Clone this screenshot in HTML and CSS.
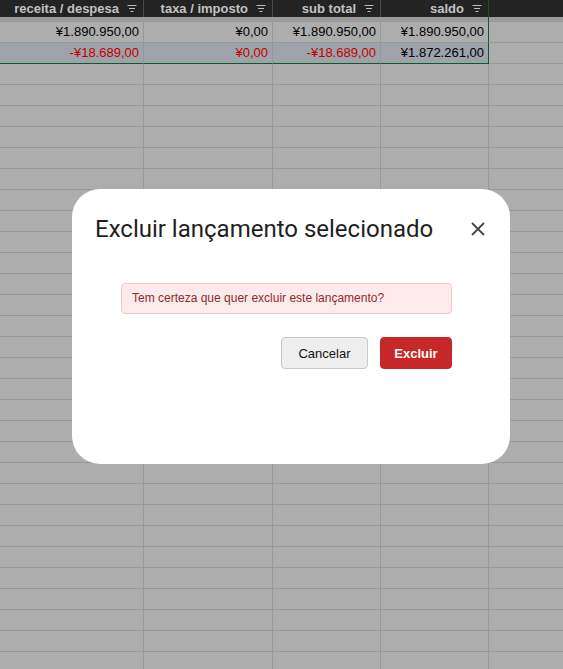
FILE: index.html
```html
<!DOCTYPE html>
<html lang="pt">
<head>
<meta charset="utf-8">
<title>Excluir lançamento</title>
<link rel="stylesheet" href="styles.css">
</head>
<body>
<div class="sheet">
  <div class="hrow">
    <div class="hcell c1"><span>receita / despesa</span><svg class="filt" viewBox="0 0 10 8"><path d="M0.5 0.5H9.5M2 3.5H8M3.5 6.5H6.5"/></svg></div>
    <div class="hcell c2"><span>taxa / imposto</span><svg class="filt" viewBox="0 0 10 8"><path d="M0.5 0.5H9.5M2 3.5H8M3.5 6.5H6.5"/></svg></div>
    <div class="hcell c3"><span>sub total</span><svg class="filt" viewBox="0 0 10 8"><path d="M0.5 0.5H9.5M2 3.5H8M3.5 6.5H6.5"/></svg></div>
    <div class="hcell c4 sel-r"><span>saldo</span><svg class="filt" viewBox="0 0 10 8"><path d="M0.5 0.5H9.5M2 3.5H8M3.5 6.5H6.5"/></svg></div>
    <div class="hcell c5"></div>
  </div>
  <div class="strip">
    <div class="scell c1"></div><div class="scell c2"></div><div class="scell c3"></div><div class="scell c4 sel-r"></div><div class="scell c5"></div>
  </div>
  <div class="row">
    <div class="cell c1">¥1.890.950,00</div>
    <div class="cell c2">¥0,00</div>
    <div class="cell c3">¥1.890.950,00</div>
    <div class="cell c4 sel-r">¥1.890.950,00</div>
    <div class="cell c5"></div>
  </div>
  <div class="row row-sel">
    <div class="cell c1 neg sel-b">-¥18.689,00</div>
    <div class="cell c2 neg sel-b">¥0,00</div>
    <div class="cell c3 neg sel-b">-¥18.689,00</div>
    <div class="cell c4 sel-b sel-r">¥1.872.261,00</div>
    <div class="cell c5 plain"></div>
  </div>
  <div class="row"><div class="cell c1"></div><div class="cell c2"></div><div class="cell c3"></div><div class="cell c4"></div><div class="cell c5"></div></div>
  <div class="row"><div class="cell c1"></div><div class="cell c2"></div><div class="cell c3"></div><div class="cell c4"></div><div class="cell c5"></div></div>
  <div class="row"><div class="cell c1"></div><div class="cell c2"></div><div class="cell c3"></div><div class="cell c4"></div><div class="cell c5"></div></div>
  <div class="row"><div class="cell c1"></div><div class="cell c2"></div><div class="cell c3"></div><div class="cell c4"></div><div class="cell c5"></div></div>
  <div class="row"><div class="cell c1"></div><div class="cell c2"></div><div class="cell c3"></div><div class="cell c4"></div><div class="cell c5"></div></div>
  <div class="row"><div class="cell c1"></div><div class="cell c2"></div><div class="cell c3"></div><div class="cell c4"></div><div class="cell c5"></div></div>
  <div class="row"><div class="cell c1"></div><div class="cell c2"></div><div class="cell c3"></div><div class="cell c4"></div><div class="cell c5"></div></div>
  <div class="row"><div class="cell c1"></div><div class="cell c2"></div><div class="cell c3"></div><div class="cell c4"></div><div class="cell c5"></div></div>
  <div class="row"><div class="cell c1"></div><div class="cell c2"></div><div class="cell c3"></div><div class="cell c4"></div><div class="cell c5"></div></div>
  <div class="row"><div class="cell c1"></div><div class="cell c2"></div><div class="cell c3"></div><div class="cell c4"></div><div class="cell c5"></div></div>
  <div class="row"><div class="cell c1"></div><div class="cell c2"></div><div class="cell c3"></div><div class="cell c4"></div><div class="cell c5"></div></div>
  <div class="row"><div class="cell c1"></div><div class="cell c2"></div><div class="cell c3"></div><div class="cell c4"></div><div class="cell c5"></div></div>
  <div class="row"><div class="cell c1"></div><div class="cell c2"></div><div class="cell c3"></div><div class="cell c4"></div><div class="cell c5"></div></div>
  <div class="row"><div class="cell c1"></div><div class="cell c2"></div><div class="cell c3"></div><div class="cell c4"></div><div class="cell c5"></div></div>
  <div class="row"><div class="cell c1"></div><div class="cell c2"></div><div class="cell c3"></div><div class="cell c4"></div><div class="cell c5"></div></div>
  <div class="row"><div class="cell c1"></div><div class="cell c2"></div><div class="cell c3"></div><div class="cell c4"></div><div class="cell c5"></div></div>
  <div class="row"><div class="cell c1"></div><div class="cell c2"></div><div class="cell c3"></div><div class="cell c4"></div><div class="cell c5"></div></div>
  <div class="row"><div class="cell c1"></div><div class="cell c2"></div><div class="cell c3"></div><div class="cell c4"></div><div class="cell c5"></div></div>
  <div class="row"><div class="cell c1"></div><div class="cell c2"></div><div class="cell c3"></div><div class="cell c4"></div><div class="cell c5"></div></div>
  <div class="row"><div class="cell c1"></div><div class="cell c2"></div><div class="cell c3"></div><div class="cell c4"></div><div class="cell c5"></div></div>
  <div class="row"><div class="cell c1"></div><div class="cell c2"></div><div class="cell c3"></div><div class="cell c4"></div><div class="cell c5"></div></div>
  <div class="row"><div class="cell c1"></div><div class="cell c2"></div><div class="cell c3"></div><div class="cell c4"></div><div class="cell c5"></div></div>
  <div class="row"><div class="cell c1"></div><div class="cell c2"></div><div class="cell c3"></div><div class="cell c4"></div><div class="cell c5"></div></div>
  <div class="row"><div class="cell c1"></div><div class="cell c2"></div><div class="cell c3"></div><div class="cell c4"></div><div class="cell c5"></div></div>
  <div class="row"><div class="cell c1"></div><div class="cell c2"></div><div class="cell c3"></div><div class="cell c4"></div><div class="cell c5"></div></div>
  <div class="row"><div class="cell c1"></div><div class="cell c2"></div><div class="cell c3"></div><div class="cell c4"></div><div class="cell c5"></div></div>
  <div class="row"><div class="cell c1"></div><div class="cell c2"></div><div class="cell c3"></div><div class="cell c4"></div><div class="cell c5"></div></div>
  <div class="row"><div class="cell c1"></div><div class="cell c2"></div><div class="cell c3"></div><div class="cell c4"></div><div class="cell c5"></div></div>
  <div class="row"><div class="cell c1"></div><div class="cell c2"></div><div class="cell c3"></div><div class="cell c4"></div><div class="cell c5"></div></div>
  <div class="row"><div class="cell c1"></div><div class="cell c2"></div><div class="cell c3"></div><div class="cell c4"></div><div class="cell c5"></div></div>
  <div class="row"><div class="cell c1"></div><div class="cell c2"></div><div class="cell c3"></div><div class="cell c4"></div><div class="cell c5"></div></div>
</div>

<div class="dialog" role="dialog">
  <div class="dlg-head">
    <h2 class="dlg-title">Excluir lançamento selecionado</h2>
    <svg class="close" viewBox="0 0 14 14"><path d="M1 1L13 13M13 1L1 13"/></svg>
  </div>
  <div class="dlg-body">
    <div class="alert">Tem certeza que quer excluir este lançamento?</div>
    <div class="actions">
      <button class="btn btn-cancel">Cancelar</button>
      <button class="btn btn-danger">Excluir</button>
    </div>
  </div>
</div>
</body>
</html>
```

FILE: styles.css
```css
html, body {
  margin: 0;
  padding: 0;
  height: 100%;
  overflow: hidden;
  background: #adadad;
}

.sheet {
  height: 100vh;
  overflow: hidden;
  font-family: "Liberation Sans", Arial, sans-serif;
  font-size: 13px;
  color: #000;
}

.hrow, .strip, .row {
  display: flex;
}

.c1 { width: 144px; }
.c2 { width: 129px; }
.c3 { width: 108px; }
.c4 { width: 108px; }
.c5 { flex: 1; }

.hrow {
  height: 17px;
  background: #232323;
}

.hcell {
  box-sizing: border-box;
  height: 17px;
  border-right: 1px solid #4a4a4a;
  display: flex;
  align-items: center;
  justify-content: flex-end;
  padding-right: 6px;
  color: #c2c2c2;
  font-weight: bold;
  line-height: 17px;
}

.hcell.c5 { border-right: none; }

.filt {
  width: 10px;
  height: 8px;
  margin-left: 8px;
  margin-top: 1px;
  fill: none;
  stroke: #bdbdbd;
  stroke-width: 1.2;
}

.strip {
  height: 5px;
  background: #9a9a9a;
}

.scell {
  box-sizing: border-box;
  height: 5px;
}

.row {
  height: 21px;
  flex-shrink: 0;
}

.cell {
  box-sizing: border-box;
  height: 21px;
  border-right: 1px solid #989898;
  border-bottom: 1px solid #989898;
  text-align: right;
  padding-right: 4px;
  line-height: 20px;
  white-space: nowrap;
  background: #adadad;
}

.cell.c5 { border-right: none; }

.row-sel .cell { background: #9ea2aa; }
.row-sel .cell.plain { background: #adadad; }

.neg { color: #c40000; }

.sel-r { border-right: 1px solid #0d5a24 !important; }
.cell.sel-b { border-bottom: 1px solid #0d5a24; }

/* dialog */
.dialog {
  position: absolute;
  left: 72px;
  top: 189px;
  width: 438px;
  height: 275px;
  box-sizing: border-box;
  background: #fff;
  border-radius: 28px;
}

.dlg-head {
  display: flex;
  align-items: center;
  justify-content: space-between;
  padding: 24px 25px 0 23px;
  height: 32px;
}

.dlg-title {
  margin: 0;
  font-family: Roboto, "Noto Sans", sans-serif;
  font-weight: 400;
  font-size: 24px;
  line-height: 32px;
  color: #1f1f1f;
}

.close {
  width: 14px;
  height: 14px;
  fill: none;
  stroke: #444746;
  stroke-width: 1.8;
}

.dlg-body {
  padding: 38px 58px 0 49px;
  font-family: "Liberation Sans", Arial, sans-serif;
}

.alert {
  box-sizing: border-box;
  height: 31px;
  padding: 0 10px;
  border: 1px solid #f6c4c4;
  border-radius: 4px;
  background: #fdebeb;
  color: #8e2b2b;
  font-size: 12px;
  line-height: 29px;
}

.actions {
  display: flex;
  justify-content: flex-end;
  gap: 12px;
  margin-top: 23px;
}

.btn {
  box-sizing: border-box;
  height: 32px;
  border-radius: 4px;
  font-family: "Liberation Sans", Arial, sans-serif;
  font-size: 13px;
  padding: 0 16px;
  cursor: pointer;
}

.btn-cancel {
  width: 87px;
  background: #eeeeee;
  border: 1px solid #c9c9c9;
  color: #111;
}

.btn-danger {
  width: 72px;
  background: #c62828;
  border: 1px solid #c62828;
  color: #fff;
  font-weight: bold;
  padding: 0;
}
```
